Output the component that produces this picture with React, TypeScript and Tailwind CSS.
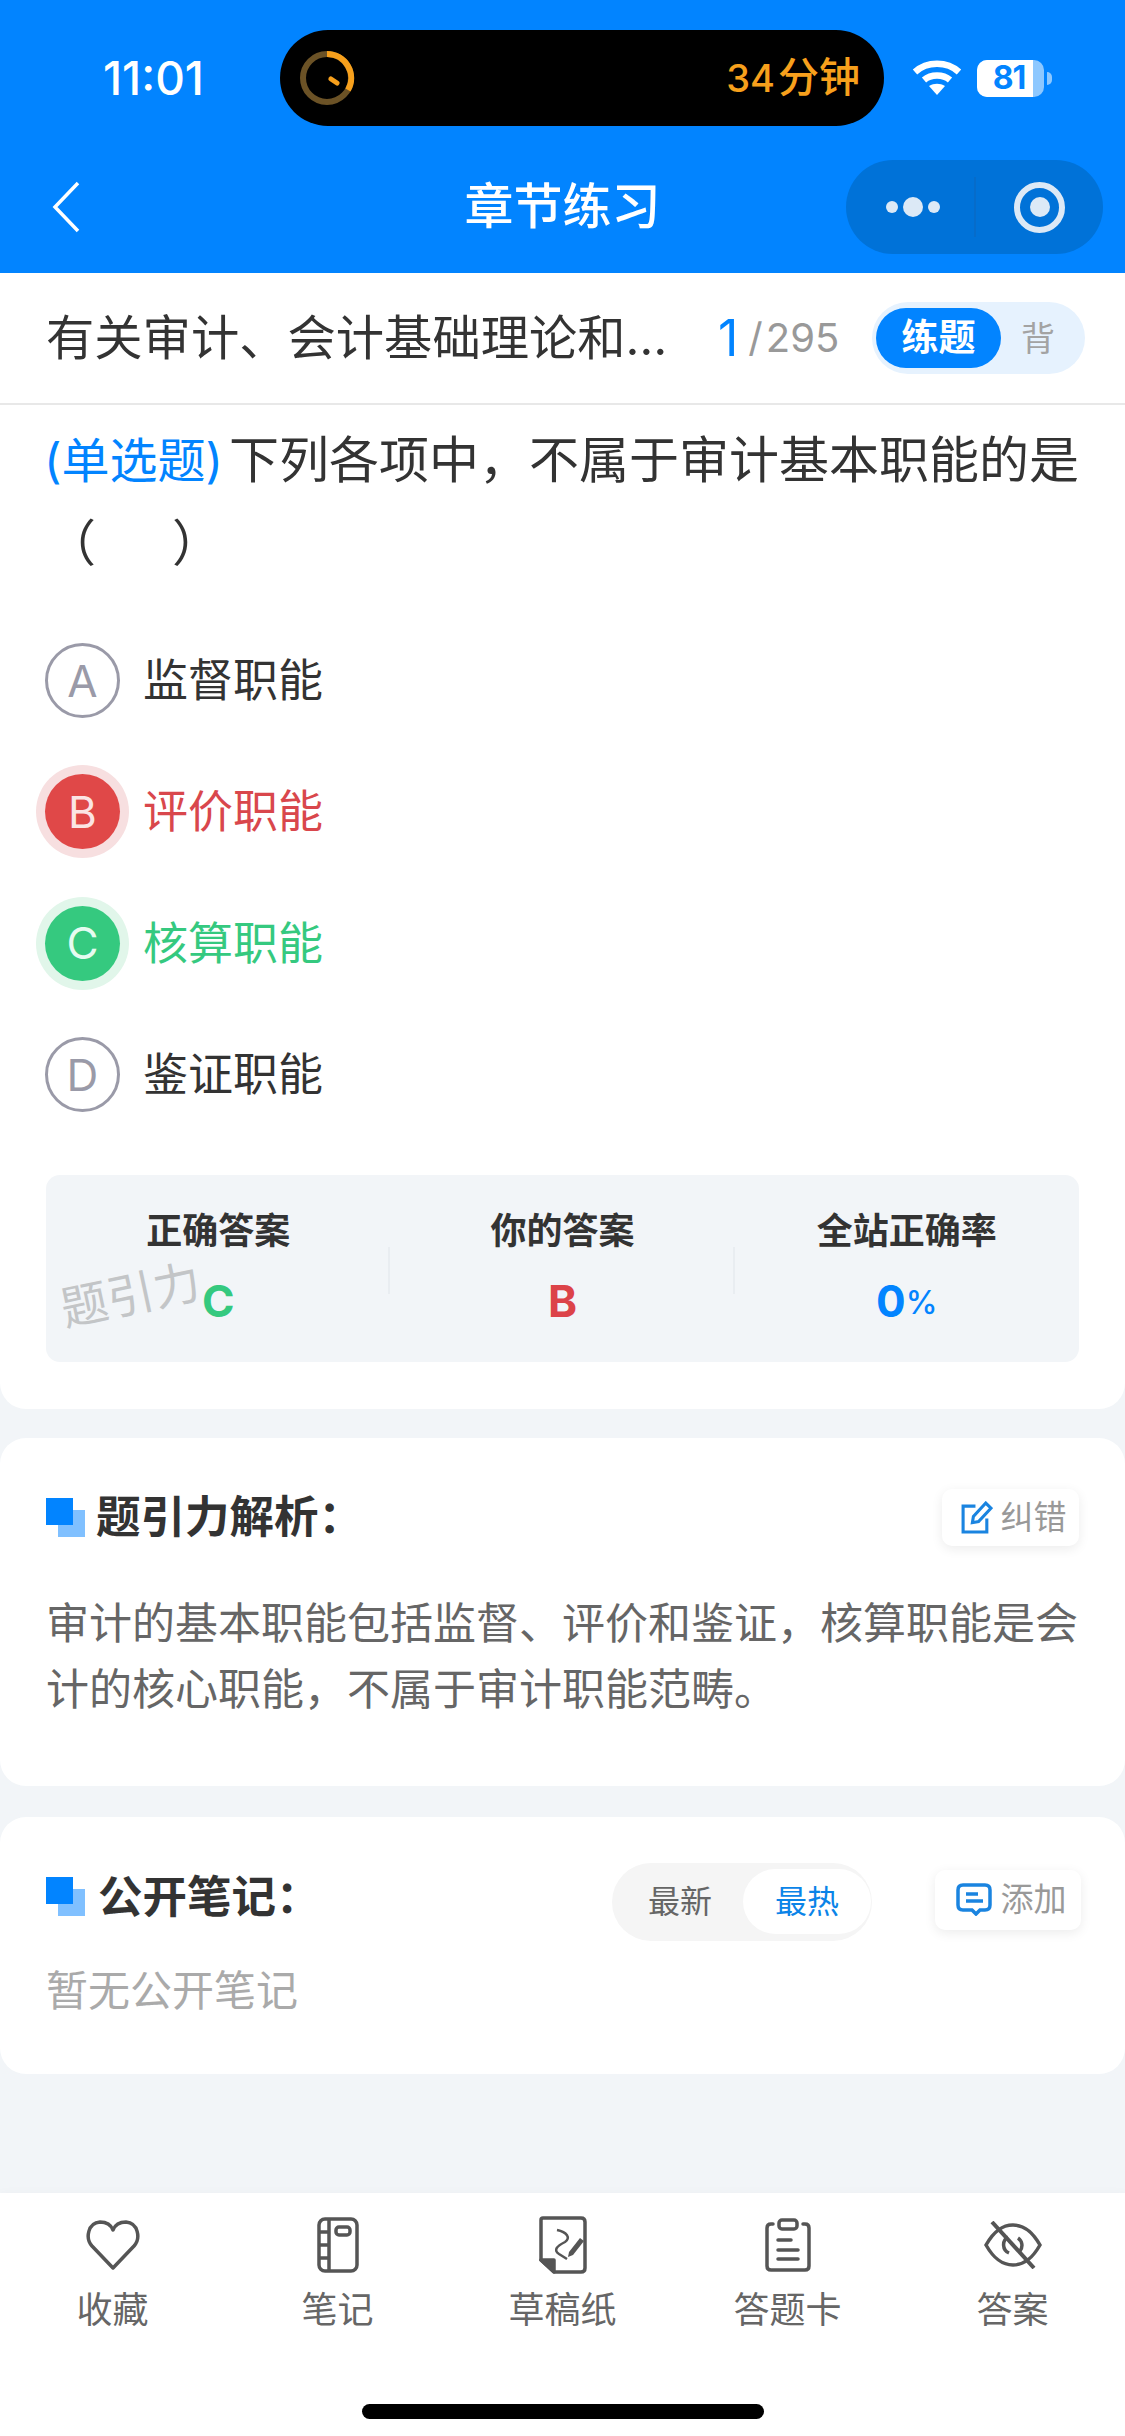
import React from 'react';

function TimerRing() {
    return (
        <svg width="56" height="56" viewBox="0 0 56 56" fill="none">
            <circle cx="28" cy="28" r="24" stroke="#6b5226" strokeWidth="6" />
            <path d="M28 4 A24 24 0 0 1 49 40" stroke="#f7a01c" strokeWidth="6" />
            <path d="M32 29 L38 33" stroke="#f7a01c" strokeWidth="5" strokeLinecap="round" />
        </svg>
    );
}

function WifiIcon() {
    return (
        <svg width="50" height="36" viewBox="0 0 50 36" fill="none" stroke="white" strokeWidth="6.5">
            <path d="M3 12 C15 1 35 1 47 12" />
            <path d="M12 20 C19 14 31 14 38 20" />
            <path d="M25 35 L17 26 C22 23 28 23 33 26 Z" fill="white" stroke="none" />
        </svg>
    );
}

function Battery() {
    return (
        <div className="flex items-center">
            <div className="relative w-[67px] h-[37px] rounded-[10px] bg-white/55 overflow-hidden">
                <div className="w-[56px] h-full bg-white" />
                <span className="absolute inset-0 flex items-center justify-center pr-[3px] text-[32px] leading-none font-bold tracking-[-1px] text-[#0284ff]">81</span>
            </div>
            <div className="ml-[3px] w-[5px] h-[13px] rounded-r-full bg-white/55" />
        </div>
    );
}

function SectionMark() {
    return (
        <svg width="39" height="39" viewBox="0 0 39 39">
            <rect x="12" y="12" width="27" height="27" fill="#80c0ff" />
            <rect x="0" y="0" width="27" height="27" fill="#0284ff" />
        </svg>
    );
}

function OptionRow({ letter, text, state }: { letter: string; text: string; state?: 'wrong' | 'right' }) {
    const badge =
        state === 'wrong'
            ? 'bg-[#e04848] text-[#fbe4e4] shadow-[0_0_0_9px_#f7dfe0]'
            : state === 'right'
              ? 'bg-[#35c97f] text-[#e6fbf0] shadow-[0_0_0_9px_#e1f6ea]'
              : 'border-[3px] border-[#9a9aa8] text-[#9a9aa8]';
    const label = state === 'wrong' ? 'text-[#d9474c]' : state === 'right' ? 'text-[#35c97f]' : 'text-[#333333]';
    return (
        <div className="h-[131.3px] flex items-center -ml-[1px]">
            <div className={`w-[75px] h-[75px] rounded-full flex items-center justify-center text-[44px] leading-none ${badge}`}>
                {letter}
            </div>
            <span className={`ml-[23px] text-[45px] leading-none ${label}`}>{text}</span>
        </div>
    );
}

function StatColumn({ label, divider, children }: { label: string; divider?: boolean; children: React.ReactNode }) {
    return (
        <div className="relative flex flex-col items-center pt-[36px]">
            {divider && <div className="absolute -left-[2px] top-[72px] h-[47px] w-[2px] bg-[#e9edf1]" />}
            <span className="text-[36px] leading-[40px] font-bold text-[#333333]">{label}</span>
            <div className="mt-[26px] h-[48px] flex items-center">{children}</div>
        </div>
    );
}

function NavItem({ label, children }: { label: string; children: React.ReactNode }) {
    return (
        <div className="flex flex-col items-center">
            <div className="h-[60px] flex items-center justify-center">{children}</div>
            <span className="mt-[13px] text-[36px] leading-[44px] text-[#666666]">{label}</span>
        </div>
    );
}

export default function App() {
    return (
        <div className="w-[1125px] h-[2436px] flex flex-col bg-[#f2f5f8] overflow-hidden font-[Inter,'Noto_Sans_CJK_SC',sans-serif]">
            {/* status bar and title bar */}
            <header className="h-[273px] bg-[#0284ff] pt-[30px]">
                <div className="flex items-center h-[96px]">
                    <span className="w-[280px] pl-[103px] text-[46px] font-medium text-white">11:01</span>
                    <div className="w-[604px] h-[96px] rounded-full bg-black flex items-center justify-between pl-[19px] pr-[24px]">
                        <TimerRing />
                        <span className="flex items-center font-medium text-[#f7a01c]">
                            <span className="text-[38px]">34</span>
                            <span className="ml-[3px] text-[41px]">分钟</span>
                        </span>
                    </div>
                    <div className="ml-[28px]"><WifiIcon /></div>
                    <div className="ml-[15px]"><Battery /></div>
                </div>
                <div className="mt-[34px] h-[94px] grid grid-cols-[1fr_auto_1fr] items-center px-[22px]">
                    <svg className="ml-[30px]" width="28" height="52" viewBox="0 0 28 52" fill="none" stroke="white" strokeWidth="3.5">
                        <path d="M26 2 L3 26 L26 50" />
                    </svg>
                    <span className="text-[49px] font-medium text-white">章节练习</span>
                    <div className="justify-self-end w-[257px] h-[94px] rounded-full bg-[#0072d8] flex items-center">
                        <div className="w-[128px] flex items-center justify-center gap-[5px] pl-[5px]">
                            <i className="w-[12px] h-[12px] rounded-full bg-[#dce9f6]" />
                            <i className="w-[20px] h-[20px] rounded-full bg-[#dce9f6]" />
                            <i className="w-[12px] h-[12px] rounded-full bg-[#dce9f6]" />
                        </div>
                        <div className="w-[2px] h-[60px] bg-[#066cca]" />
                        <div className="flex-1 flex items-center justify-center">
                            <div className="w-[51px] h-[51px] rounded-full border-[6px] border-[#dce9f6] flex items-center justify-center">
                                <div className="w-[20px] h-[20px] rounded-full bg-[#dce9f6]" />
                            </div>
                        </div>
                    </div>
                </div>
            </header>

            {/* question card */}
            <section className="bg-white rounded-b-[26px] pb-[47px]">
                <div className="h-[132px] border-b-2 border-[#e8e8e8] flex items-center pl-[46px] pr-[40px]">
                    <span className="w-[671px] text-[48.3px] leading-none whitespace-nowrap text-[#333333]">有关审计、会计基础理论和…</span>
                    <span className="ml-[1px] text-[50px] leading-none text-[#0284ff]">1</span>
                    <span className="ml-[10px] text-[40px] leading-none text-[#999999]">/</span>
                    <span className="ml-[3px] text-[40px] leading-none text-[#999999]">295</span>
                    <div className="ml-auto w-[213px] h-[72px] rounded-full bg-[#e6f2fe] flex items-center pl-[4px]">
                        <div className="w-[125px] h-[60px] rounded-full bg-[#0284ff] flex items-center justify-center text-[37px] font-bold text-white">练题</div>
                        <span className="ml-[20px] text-[34px] text-[#a3a3a3]">背</span>
                    </div>
                </div>
                <div className="px-[46px]">
                    <p className="pt-[14px] text-[50px] leading-[83px] text-[#333333] whitespace-nowrap">
                        <span className="-ml-[2px] mr-[6px] text-[48px] text-[#0284ff]">(单选题)</span>下列各项中，不属于审计基本职能的是
                        <br />（<span className="inline-block w-[76px]" />）
                    </p>
                    <div className="mt-[30px] flex flex-col">
                        <OptionRow letter="A" text="监督职能" />
                        <OptionRow letter="B" text="评价职能" state="wrong" />
                        <OptionRow letter="C" text="核算职能" state="right" />
                        <OptionRow letter="D" text="鉴证职能" />
                    </div>
                    <div className="relative mt-[34.6px] h-[187px] rounded-[14px] bg-[#f2f5f8] grid grid-cols-3">
                        <StatColumn label="正确答案">
                            <span className="text-[44px] leading-none font-bold text-[#35c97f]">C</span>
                        </StatColumn>
                        <StatColumn label="你的答案" divider>
                            <span className="text-[44px] leading-none font-bold text-[#dc4349]">B</span>
                        </StatColumn>
                        <StatColumn label="全站正确率" divider>
                            <span className="text-[44px] leading-none font-bold text-[#0284ff]">0</span>
                            <span className="mt-[4px] text-[32px] leading-none font-medium text-[#0284ff]">%</span>
                        </StatColumn>
                        <span className="absolute left-[14px] top-[95px] -rotate-12 text-[47px] leading-[50px] text-[#c3c5c7]">题引力</span>
                    </div>
                </div>
            </section>

            {/* explanation card */}
            <section className="mt-[29px] bg-white rounded-[26px] pt-[51px] pb-[64px] px-[46px]">
                <div className="flex items-center justify-between h-[57px]">
                    <div className="flex items-center gap-[11px]">
                        <SectionMark />
                        <h2 className="text-[44.5px] leading-none font-bold text-[#333333]">题引力解析：</h2>
                    </div>
                    <div className="w-[137px] h-[57px] rounded-[10px] bg-white shadow-[0_3px_12px_rgba(0,0,0,0.08)] flex items-center justify-center gap-[8px] pl-[5px]">
                        <svg width="33" height="33" viewBox="0 0 32 32" fill="none" stroke="#1a84e0" strokeWidth="3">
                            <path d="M15 5 H3 V30 H26 V17" />
                            <path d="M12 21 L13 15 L25 2 L30 7 L18 20 Z" />
                        </svg>
                        <span className="text-[33px] leading-none text-[#999999]">纠错</span>
                    </div>
                </div>
                <p className="mt-[44px] text-[43px] leading-[66px] text-[#666666]">
                    审计的基本职能包括监督、评价和鉴证，核算职能是会计的核心职能，不属于审计职能范畴。
                </p>
            </section>

            {/* public notes card */}
            <section className="mt-[31px] bg-white rounded-[26px] pt-[46px] pb-[53px] pl-[46px] pr-[44px]">
                <div className="flex items-center h-[78px]">
                    <div className="flex items-center gap-[13px] mb-[10px]">
                        <SectionMark />
                        <h2 className="text-[44.5px] leading-none font-bold text-[#333333]">公开笔记：</h2>
                    </div>
                    <div className="ml-auto w-[260px] h-[78px] rounded-full bg-[#f5f5f5] flex items-center pl-[36px]">
                        <span className="text-[32px] leading-none text-[#666666]">最新</span>
                        <div className="ml-[31px] w-[128px] h-[65px] rounded-full bg-white flex items-center justify-center text-[32px] leading-none text-[#0a84e8]">最热</div>
                    </div>
                    <div className="ml-[63px] mb-[4px] w-[146px] h-[60px] rounded-[10px] bg-white shadow-[0_3px_12px_rgba(0,0,0,0.08)] flex items-center justify-center gap-[9px] pl-[6px]">
                        <svg width="36" height="33" viewBox="0 0 36 33" fill="none" stroke="#1a84e0" strokeWidth="3.5">
                            <path d="M7 2 H29 Q34 2 34 7 V22 Q34 27 29 27 H24 L20 31 L16 27 H7 Q2 27 2 22 V7 Q2 2 7 2 Z" />
                            <path d="M10 11 H22 M10 18 H27" />
                        </svg>
                        <span className="text-[33px] leading-none text-[#999999]">添加</span>
                    </div>
                </div>
                <p className="mt-[20px] text-[42px] leading-[60px] text-[#aaaaaa]">暂无公开笔记</p>
            </section>

            {/* bottom toolbar */}
            <nav className="mt-auto h-[243px] bg-white flex flex-col shadow-[0_-2px_8px_rgba(0,0,0,0.02)]">
                <div className="grid grid-cols-5 pt-[22px]">
                    <NavItem label="收藏">
                        <svg width="54" height="50" viewBox="0 0 54 50" fill="none" stroke="#555555" strokeWidth="3.5" strokeLinejoin="round">
                            <path d="M27 48 L6 26 C-1 18 2 3 14 2 C20 2 25 5 27 10 C29 5 34 2 40 2 C52 3 55 18 48 26 Z" />
                        </svg>
                    </NavItem>
                    <NavItem label="笔记">
                        <svg width="42" height="56" viewBox="0 0 42 56" fill="none" stroke="#555555" strokeWidth="3.5">
                            <rect x="2" y="2" width="38" height="52" rx="6" />
                            <path d="M12 2 V54 M2 15 H12 M2 28 H12 M2 41 H12" />
                            <rect x="19" y="10" width="14" height="8" rx="3" />
                        </svg>
                    </NavItem>
                    <NavItem label="草稿纸">
                        <svg width="48" height="58" viewBox="0 0 48 58" fill="none" stroke="#555555" strokeWidth="3.5" strokeLinejoin="round">
                            <path d="M4 2 H42 Q46 2 46 6 V52 Q46 56 42 56 H15 L2 44 V4 Q2 2 4 2 Z" />
                            <path d="M2 44 H15 V56 Z" fill="#555555" />
                            <path d="M18 14 C28 16 32 22 26 26 C18 30 14 34 20 38 L28 43" strokeWidth="2.5" />
                            <path d="M30 36 L41 22 L45 25 L34 39 L29 41 Z" fill="#555555" stroke="none" />
                        </svg>
                    </NavItem>
                    <NavItem label="答题卡">
                        <svg width="46" height="54" viewBox="0 0 46 54" fill="none" stroke="#555555" strokeWidth="3.5" strokeLinecap="round">
                            <path d="M8 6 H6 Q2 6 2 10 V48 Q2 52 6 52 H40 Q44 52 44 48 V10 Q44 6 40 6 H38" />
                            <rect x="14" y="2" width="18" height="9" rx="3" />
                            <path d="M13 22 H26 M13 32 H33 M13 41 H33" />
                        </svg>
                    </NavItem>
                    <NavItem label="答案">
                        <svg width="58" height="48" viewBox="0 0 58 48" fill="none" stroke="#555555" strokeWidth="3.5">
                            <path d="M2 24 C10 10 18 4 29 4 C40 4 48 10 56 24 C48 38 40 44 29 44 C18 44 10 38 2 24 Z" />
                            <path d="M24 16 A9 9 0 0 0 25 32 M34 17 A9 9 0 0 1 36 30" />
                            <path d="M8 1 L50 47" strokeWidth="4" />
                        </svg>
                    </NavItem>
                </div>
                <div className="mt-auto mb-[17px] mx-auto w-[402px] h-[15px] rounded-full bg-black" />
            </nav>
        </div>
    );
}
